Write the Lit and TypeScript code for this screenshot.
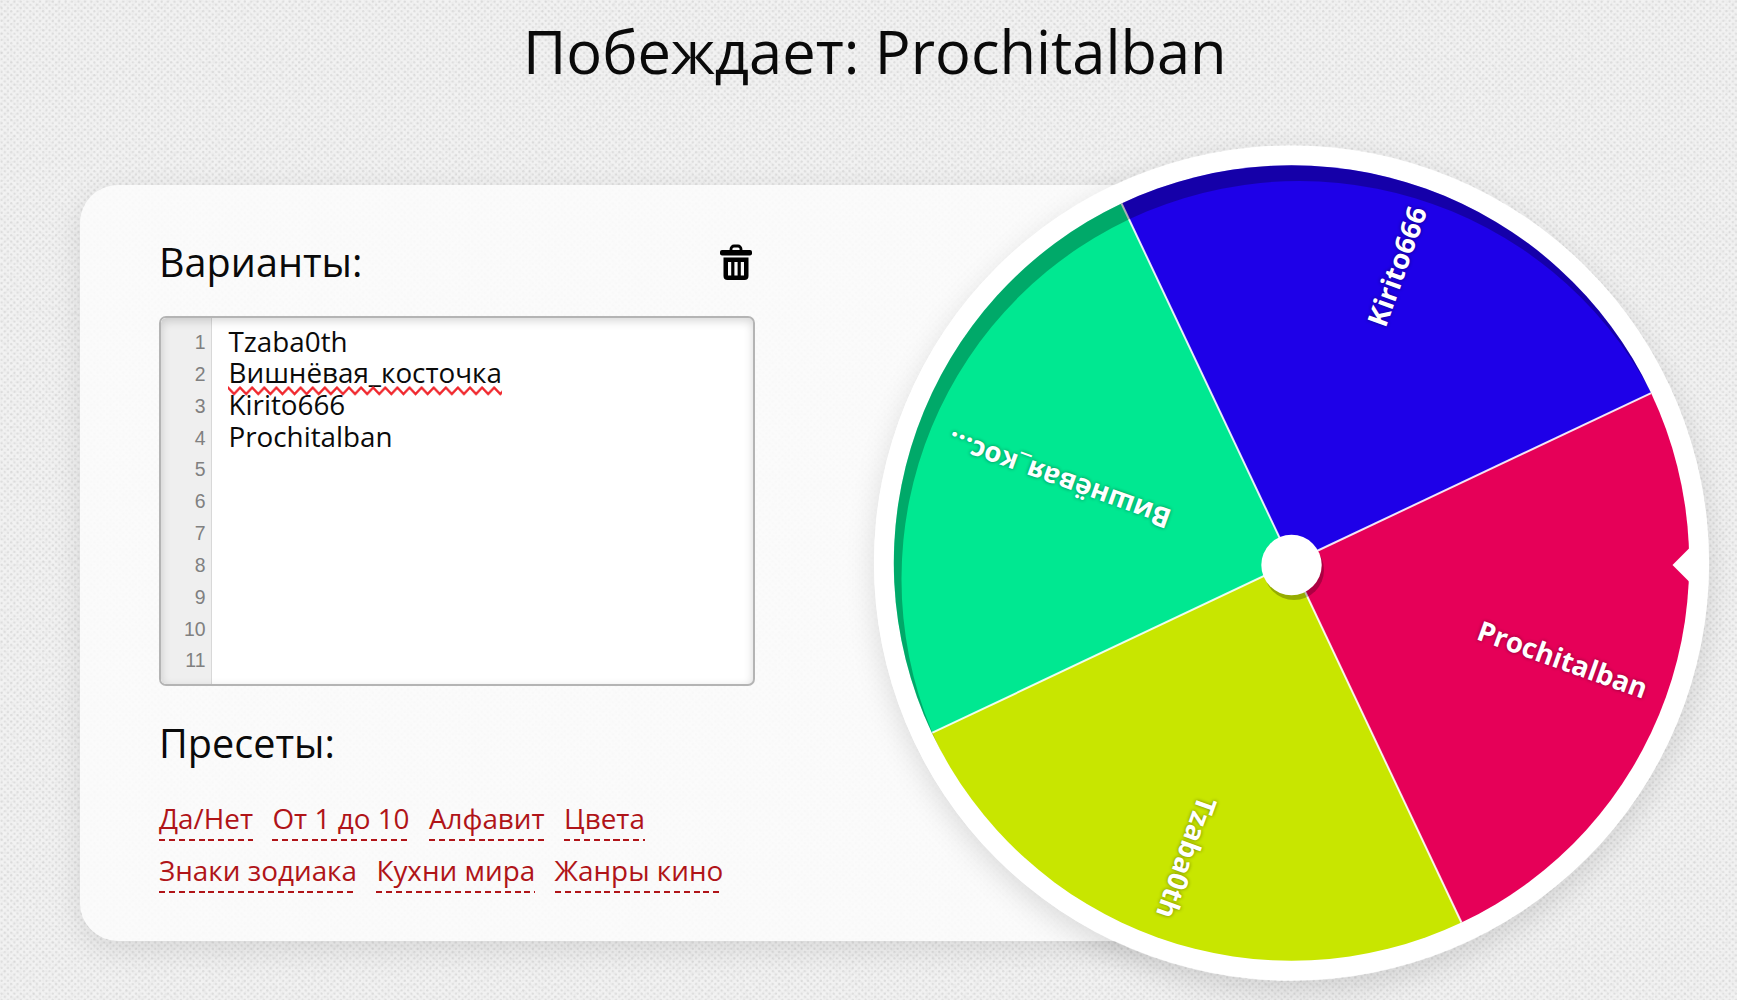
import { LitElement, html, svg, css } from "lit";
import { customElement } from "lit/decorators.js";

const VARIANTS = [
  { name: "Tzaba0th", misspelled: false },
  { name: "Вишнёвая_косточка", misspelled: true },
  { name: "Kirito666", misspelled: false },
  { name: "Prochitalban", misspelled: false },
];

const PRESETS = [
  ["Да/Нет", "От 1 до 10", "Алфавит", "Цвета"],
  ["Знаки зодиака", "Кухни мира", "Жанры кино"],
];

// Sector start angles are in degrees, clockwise from three o'clock.
const SECTORS = [
  { label: "Prochitalban", color: "#e60058", start: -25.3, end: 377 },
  { label: "Tzaba0th", color: "#c8e600", start: 64.7, end: 376.5 },
  { label: "Вишнёвая_кос...", color: "#00e891", start: 154.7, end: 364.5 },
  { label: "Kirito666", color: "#1e00e8", start: 244.7, end: 377.5 },
];

const R = 397.7;

function point(deg: number, r: number) {
  const a = (deg * Math.PI) / 180;
  return { x: +(r * Math.cos(a)).toFixed(2), y: +(r * Math.sin(a)).toFixed(2) };
}

@customElement("fortune-wheel")
export class FortuneWheel extends LitElement {
  static styles = css`
    :host {
      display: block;
      width: 835px;
      height: 836px;
      border-radius: 50%;
      box-shadow: 0 10px 30px rgba(0, 0, 0, 0.13);
    }
    .wheel {
      display: block;
      overflow: visible;
    }
    .label {
      font: 700 27.8px "Open Sans", sans-serif;
      fill: #fff;
      text-anchor: end;
      text-shadow: 0 0 4px rgba(0, 0, 0, 0.45);
    }
  `;

  render() {
    return html`
      <svg class="wheel" width="835" height="836" viewBox="-417.5 -418 835 836">
        <circle r="417.6" fill="#fff" />
        ${SECTORS.map((s) => {
          const a = point(s.start, R);
          const b = point(s.start + 90, R);
          return svg`<path d="M0 0L${a.x} ${a.y}A${R} ${R} 0 0 1 ${b.x} ${b.y}Z" fill=${s.color} />`;
        })}
        ${SECTORS.map((s) => {
          const a = point(s.start, R);
          return svg`<line x2=${a.x} y2=${a.y} stroke="#fff" stroke-opacity=".88" stroke-width="2" />`;
        })}
        ${SECTORS.map(
          (s) => svg`<text class="label" x=${s.end} y="9.5" transform="rotate(${s.start + 45})">${s.label}</text>`
        )}
        <path
          fill="#000"
          fill-opacity=".27"
          fill-rule="evenodd"
          clip-path="url(#face)"
          d="M-420 -420H430V430H-420ZM-390 16a398 398 0 1 0 796 0a398 398 0 1 0 -796 0Z"
        />
        <clipPath id="face"><circle r="397.7" /></clipPath>
        <circle cx="2.5" cy="7" r="30" fill="#000" fill-opacity=".25" />
        <circle cy="2" r="30.2" fill="#fff" />
        <path d="M381 2L398.5 -15.5V19.5Z" fill="#fff" />
      </svg>
    `;
  }
}

@customElement("app-root")
export class AppRoot extends LitElement {
  static styles = css`
    :host {
      display: block;
      position: relative;
      width: 1737px;
      height: 1000px;
      overflow: hidden;
      background: #f2f2f2;
      color: #0a0a0a;
      font-family: "Open Sans", sans-serif;
    }
    .texture {
      position: absolute;
      inset: 0;
    }
    .page {
      position: relative;
    }
    .title {
      margin: 0;
      padding: 10px 0 0 12.5px;
      height: 174.5px;
      font-size: 59.6px;
      font-weight: 400;
      line-height: 82px;
      text-align: center;
    }
    .stage {
      display: flex;
      margin-left: 79.5px;
    }
    .card {
      box-sizing: border-box;
      flex: none;
      width: 1212px;
      height: 756px;
      padding: 50px 80px 0 79.5px;
      border-radius: 38px;
      background: rgba(252, 252, 252, 0.88);
      box-shadow: 0 8px 30px rgba(0, 0, 0, 0.1);
    }
    .wheel {
      flex: none;
      margin: -39.7px 0 0 -417.3px;
    }
    .editor {
      width: 596px;
    }
    .head {
      display: flex;
      justify-content: space-between;
      align-items: center;
      height: 54px;
      padding-right: 2.5px;
    }
    .trash {
      position: relative;
      top: 1px;
    }
    .heading {
      margin: 0;
      font-size: 39.6px;
      font-weight: 400;
      line-height: 54px;
    }
    .box {
      position: relative;
      display: flex;
      box-sizing: border-box;
      height: 370px;
      margin-top: 27.5px;
      border: 2px solid #b4b4b4;
      border-radius: 7px;
      background: #fff;
      overflow: hidden;
    }
    .box::after {
      content: "";
      position: absolute;
      inset: 0;
      box-shadow: inset 0 3px 10px rgba(0, 0, 0, 0.16);
      border-radius: 5px;
    }
    .gutter {
      box-sizing: content-box;
      padding: 9px 5.5px 0 0;
      width: 44.5px;
      border-right: 1.5px solid #d8d8d8;
      background: #efefef;
      color: #808080;
      font: 19.4px/31.85px "Liberation Sans", sans-serif;
      text-align: right;
    }
    .lines {
      padding: 7.5px 0 0 16.5px;
      font-size: 27.8px;
      line-height: 31.85px;
    }
    .line {
      display: flex;
      height: 31.85px;
    }
    .word {
      position: relative;
      display: block;
    }
    .squiggle {
      position: absolute;
      left: -0.5px;
      top: 28.5px;
      width: calc(100% + 1px);
      height: 10px;
    }
    .presets {
      margin-top: 30px;
    }
    .links {
      display: flex;
      flex-direction: column;
      gap: 6.7px;
      margin-top: 26px;
    }
    .row {
      display: flex;
      gap: 19.4px;
    }
    .link {
      display: block;
      position: relative;
      height: 45px;
      color: #b01418;
      font-size: 27.87px;
      line-height: 45px;
      white-space: nowrap;
    }
    .link::after {
      content: "";
      position: absolute;
      left: 0;
      right: 0;
      bottom: 0;
      height: 2px;
      background: repeating-linear-gradient(90deg, #b01418 0 6px, transparent 6px 9.9px);
    }
  `;

  private texture() {
    return html`
      <svg class="texture" width="1737" height="1000">
        <filter id="grain" x="0" y="0" width="100%" height="100%">
          <feTurbulence type="fractalNoise" baseFrequency=".31" numOctaves="2" seed="4" />
          <feColorMatrix values="0 0 0 0 .4  0 0 0 0 .4  0 0 0 0 .4  0 .7 0 0 -.3" />
        </filter>
        <pattern id="weave" width="6.4" height="6.4" patternUnits="userSpaceOnUse">
          <circle cx="1.6" cy="1.6" r="1.1" fill="#000" fill-opacity=".085" />
          <circle cx="4.8" cy="4.8" r="1.1" fill="#000" fill-opacity=".085" />
        </pattern>
        <rect width="1737" height="1000" fill="url(#weave)" />
        <rect width="1737" height="1000" filter="url(#grain)" opacity=".4" />
      </svg>
    `;
  }

  private trash() {
    return html`
      <svg class="trash" width="34" height="37" viewBox="0 0 34 37">
        <path d="M12 6V5a3 3 0 0 1 3-3h4a3 3 0 0 1 3 3v1" fill="none" stroke="#000" stroke-width="2.8" />
        <rect x="1" y="6" width="32" height="5.4" rx="2" />
        <path
          fill-rule="evenodd"
          d="M4.5 13.500H29.500V32a4 4 0 0 1-4 4H8.500a4 4 0 0 1-4-4ZM9 18V31.500h3.200V18ZM15.400 18V31.500h3.200V18ZM21.800 18V31.500h3.200V18Z"
        />
      </svg>
    `;
  }

  private squiggle() {
    return html`
      <svg class="squiggle">
        <pattern id="wave" width="12.1" height="10" patternUnits="userSpaceOnUse">
          <path d="M-1.200 .4L0 1.600L6.050 8L12.100 1.600L13.300 .4" fill="none" stroke="#f0272d" stroke-width="2.300" />
        </pattern>
        <rect width="100%" height="10" fill="url(#wave)" />
      </svg>
    `;
  }

  render() {
    return html`
      ${this.texture()}
      <div class="page">
        <h1 class="title">Побеждает: Prochitalban</h1>
        <div class="stage">
          <section class="card">
            <div class="editor">
              <div class="head">
                <h2 class="heading">Варианты:</h2>
                ${this.trash()}
              </div>
              <div class="box">
                <div class="gutter">${Array.from({ length: 11 }, (_, i) => html`<div>${i + 1}</div>`)}</div>
                <div class="lines">
                  ${VARIANTS.map(
                    (v) => html`<div class="line">
                      <span class="word">${v.name}${v.misspelled ? this.squiggle() : ""}</span>
                    </div>`
                  )}
                </div>
              </div>
              <div class="presets">
                <h2 class="heading">Пресеты:</h2>
                <div class="links">
                  ${PRESETS.map(
                    (row) => html`<div class="row">${row.map((p) => html`<a class="link">${p}</a>`)}</div>`
                  )}
                </div>
              </div>
            </div>
          </section>
          <fortune-wheel class="wheel"></fortune-wheel>
        </div>
      </div>
    `;
  }
}
